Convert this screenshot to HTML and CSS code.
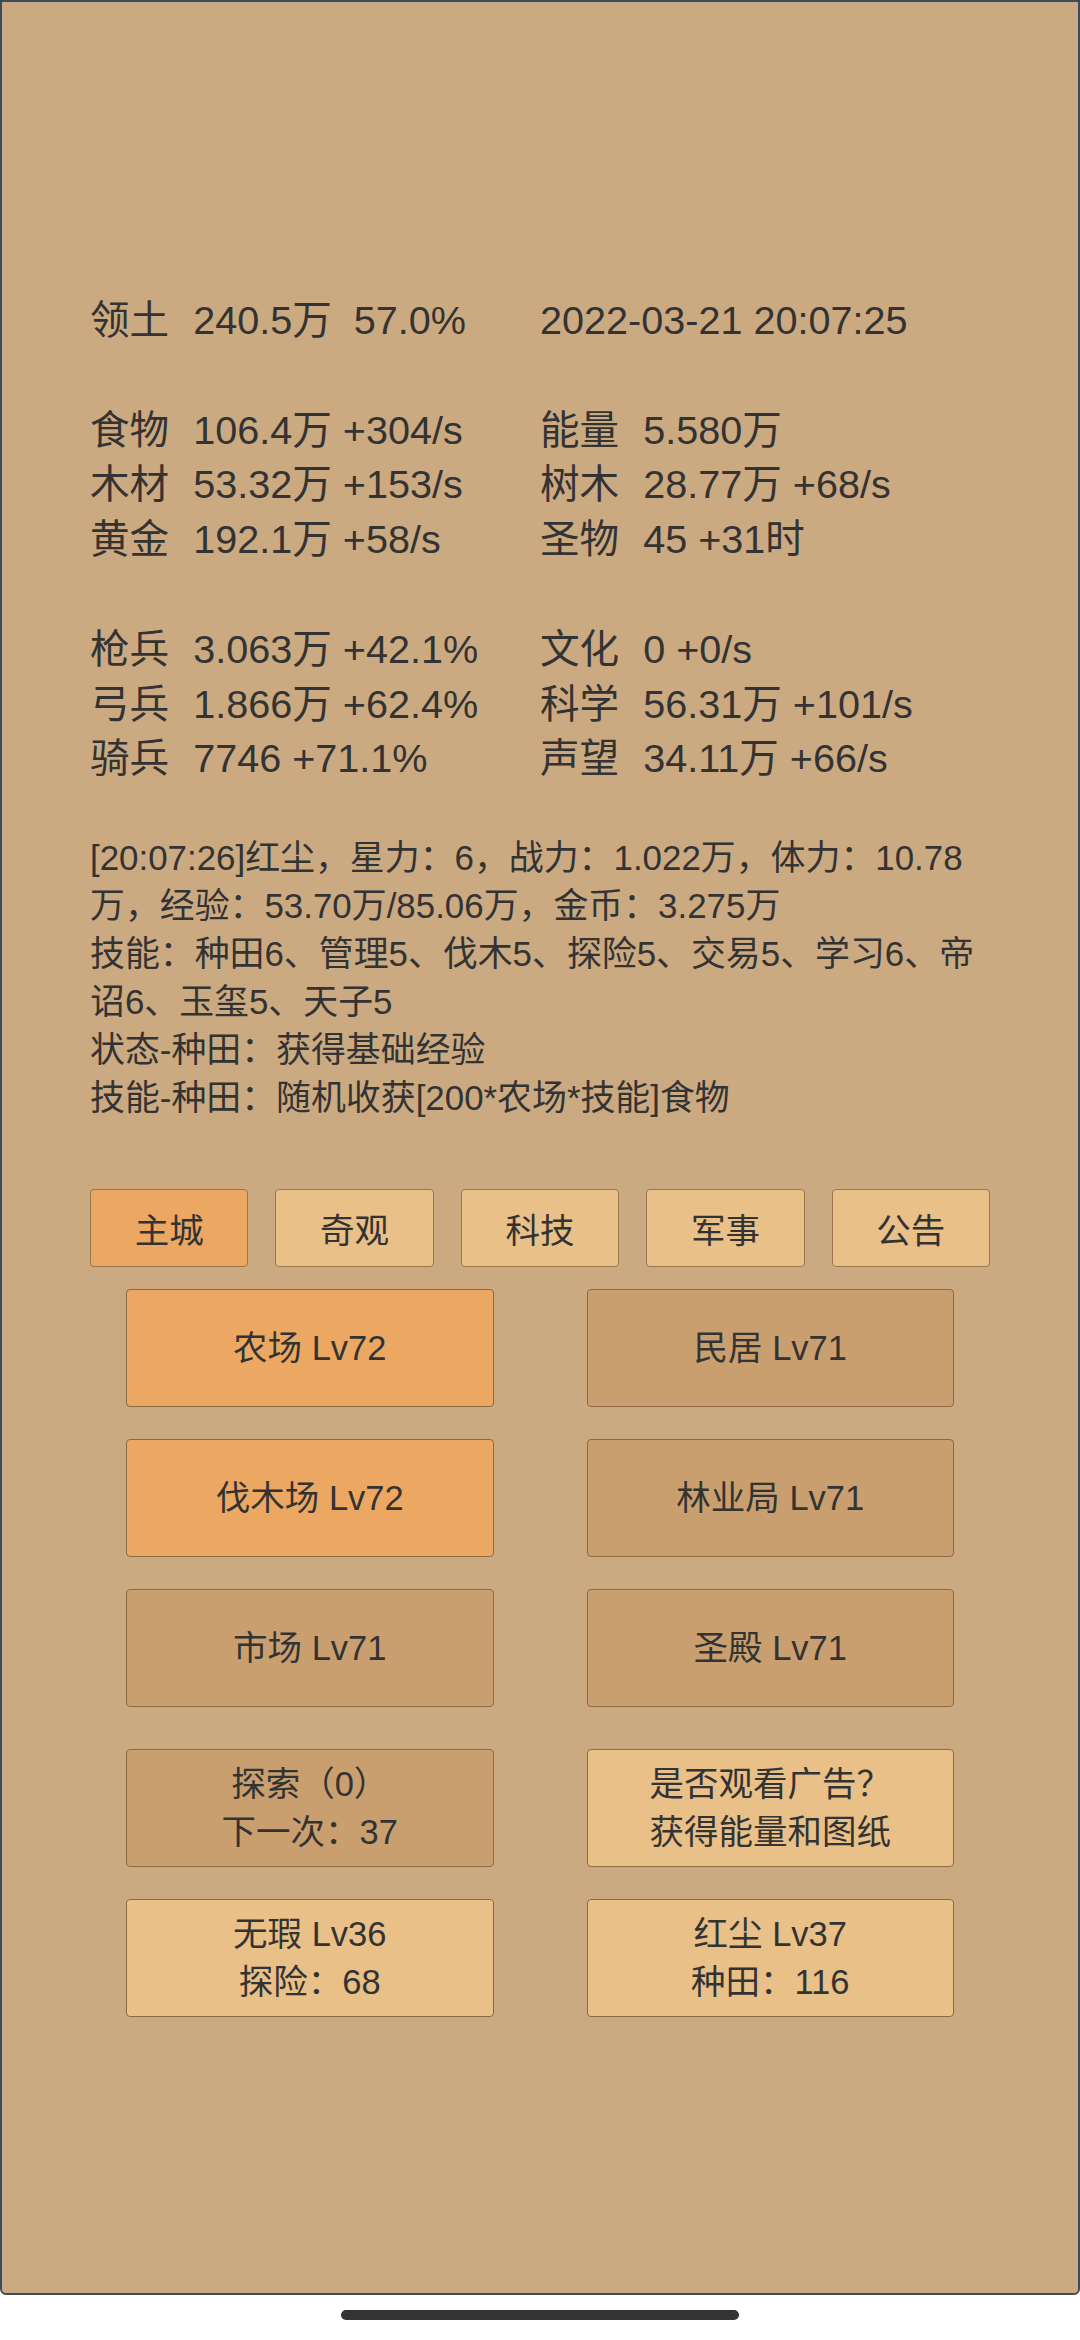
FILE: index.html
```html
<!DOCTYPE html>
<html lang="zh-CN">
<head>
  <meta charset="UTF-8" />
  <meta name="viewport" content="width=device-width, initial-scale=1.0"/>
  <title>主城</title>
  <link rel="stylesheet" href="styles.css">
</head>
<body>
  <div class="screen">
    <div class="stats">
      <div class="stat-group">
        <div><span class="label">领土</span>240.5万&nbsp; 57.0%</div>
        <div>2022-03-21 20:07:25</div>
      </div>

      <div class="stat-group">
        <div><span class="label">食物</span>106.4万 +304/s</div>
        <div><span class="label">能量</span>5.580万</div>
        <div><span class="label">木材</span>53.32万 +153/s</div>
        <div><span class="label">树木</span>28.77万 +68/s</div>
        <div><span class="label">黄金</span>192.1万 +58/s</div>
        <div><span class="label">圣物</span>45 +31时</div>
      </div>

      <div class="stat-group">
        <div><span class="label">枪兵</span>3.063万 +42.1%</div>
        <div><span class="label">文化</span>0 +0/s</div>
        <div><span class="label">弓兵</span>1.866万 +62.4%</div>
        <div><span class="label">科学</span>56.31万 +101/s</div>
        <div><span class="label">骑兵</span>7746 +71.1%</div>
        <div><span class="label">声望</span>34.11万 +66/s</div>
      </div>
    </div>

    <div class="log">
      <p>[20:07:26]红尘，星力：6，战力：1.022万，体力：10.78万，经验：53.70万/85.06万，金币：3.275万</p>
      <p>技能：种田6、管理5、伐木5、探险5、交易5、学习6、帝诏6、玉玺5、天子5</p>
      <p>状态-种田：获得基础经验</p>
      <p>技能-种田：随机收获[200*农场*技能]食物</p>
    </div>

    <div class="tabs">
      <button class="tab active">主城</button>
      <button class="tab">奇观</button>
      <button class="tab">科技</button>
      <button class="tab">军事</button>
      <button class="tab">公告</button>
    </div>

    <div class="buildings">
      <button class="card active">农场 Lv72</button>
      <button class="card">民居 Lv71</button>
      <button class="card active">伐木场 Lv72</button>
      <button class="card">林业局 Lv71</button>
      <button class="card">市场 Lv71</button>
      <button class="card">圣殿 Lv71</button>
    </div>

    <div class="actions">
      <button class="card">探索（0）<br>下一次：37</button>
      <button class="card light">是否观看广告？<br>获得能量和图纸</button>
      <button class="card light">无瑕 Lv36<br>探险：68</button>
      <button class="card light">红尘 Lv37<br>种田：116</button>
    </div>
  </div>

  <div class="home-bar"></div>
</body>
</html>
```

FILE: styles.css
```css
* {
  box-sizing: border-box;
}

body {
  margin: 0;
  background: #fff;
  font-family: "Liberation Sans", "Noto Sans CJK SC", sans-serif;
  color: #333;
}

.screen {
  height: 2295px;
  border: 2px solid #3e4a5e;
  border-radius: 0 0 6px 6px;
  background: #cbaa82;
  padding: 291px 88px 0;
}

.stat-group {
  display: grid;
  grid-template-columns: 1fr 1fr;
  font-size: 39.6px;
  line-height: 54.8px;
  white-space: nowrap;
}

.stat-group + .stat-group {
  margin-top: 54.8px;
}

.label {
  margin-right: 24px;
}

.log {
  margin-top: 48px;
  font-size: 34.9px;
  line-height: 48px;
}

.log p {
  margin: 0;
}

.tabs {
  display: flex;
  gap: 27px;
  margin-top: 67px;
}

.tab {
  flex: 1;
  height: 78px;
  padding: 0;
  border: 1px solid #9a774e;
  border-radius: 4px;
  background: #e9c087;
  color: #333;
  font-family: inherit;
  font-size: 34.5px;
}

.tab.active {
  background: #eca862;
}

.buildings, .actions {
  display: grid;
  grid-template-columns: 1fr 1fr;
  column-gap: 93px;
  row-gap: 32.5px;
  padding: 0 36px;
}

.buildings {
  margin-top: 22px;
}

.actions {
  margin-top: 42.5px;
}

.card {
  height: 117.5px;
  padding: 0;
  border: 1px solid #8c6a44;
  border-radius: 4px;
  background: #c99f6f;
  color: #333;
  font-family: inherit;
  font-size: 34.5px;
  line-height: 48px;
}

.card.active {
  background: #eca862;
}

.card.light {
  background: #e9c087;
}

.home-bar {
  width: 398px;
  height: 10px;
  margin: 15px auto 0;
  border-radius: 5px;
  background: #333;
}
```
